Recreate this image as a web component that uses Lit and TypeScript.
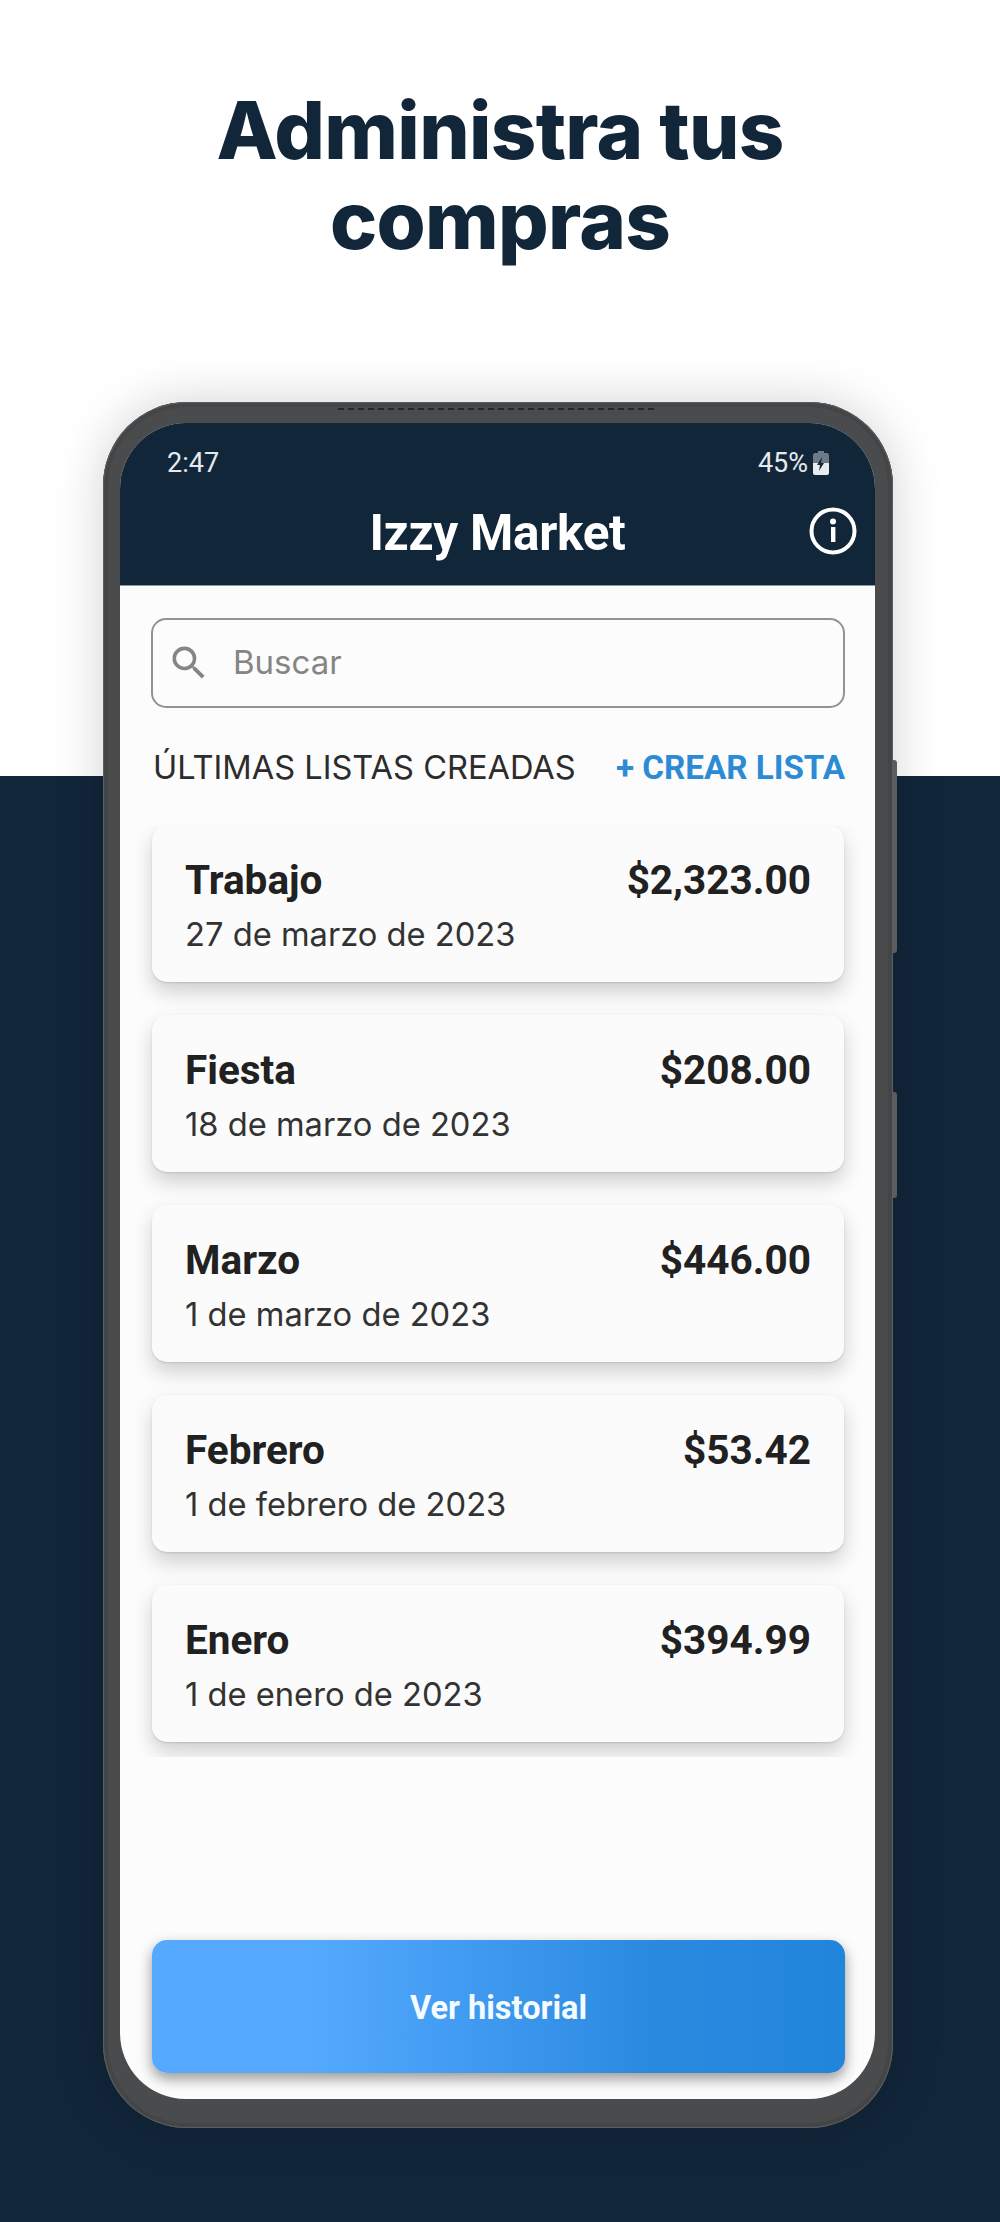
import { LitElement, html, css, svg } from "lit";
import { customElement } from "lit/decorators.js";

const lists = [
  { name: "Trabajo", price: "$2,323.00", date: "27 de marzo de 2023" },
  { name: "Fiesta", price: "$208.00", date: "18 de marzo de 2023" },
  { name: "Marzo", price: "$446.00", date: "1 de marzo de 2023" },
  { name: "Febrero", price: "$53.42", date: "1 de febrero de 2023" },
  { name: "Enero", price: "$394.99", date: "1 de enero de 2023" },
];

const searchIcon = svg`<path fill="#858585" d="M15.5 14h-.79l-.28-.27A6.47 6.47 0 0 0 16 9.5 6.5 6.5 0 1 0 9.5 16c1.61 0 3.09-.59 4.23-1.57l.27.28v.79l5 4.99L20.49 19l-4.99-5zm-6 0C7.01 14 5 11.99 5 9.5S7.01 5 9.5 5 14 7.01 14 9.5 11.99 14 9.5 14z"/>`;

@customElement("app-root")
export class AppRoot extends LitElement {
  static styles = css`
    :host {
      display: block;
      width: 1000px;
      height: 2222px;
      overflow: hidden;
      background: linear-gradient(#fff 0, #fff 776px, #12263a 776px, #12263a 100%);
      font-family: Inter, "Liberation Sans", sans-serif;
    }
    .headline {
      margin: 0;
      height: 402px;
      box-sizing: border-box;
      padding-top: 85px;
      text-align: center;
      font-size: 79.5px;
      line-height: 90px;
      font-weight: 800;
      letter-spacing: -0.7px;
      color: #12263a;
    }
    .phone {
      position: relative;
      width: 790px;
      height: 1726px;
      margin-left: 103px;
      box-sizing: border-box;
      padding: 21px 18px 29px 17px;
      border-radius: 84px;
      background: #4a4b4c;
      box-shadow: 0 0 50px rgba(0, 0, 0, 0.18), inset 0 0 0 1px #5c5d5e, inset 0 0 0 5px #444546;
    }
    .speaker {
      position: absolute;
      left: 235px;
      top: 6px;
      width: 316px;
      height: 0;
      border-top: 2px dashed #262626;
    }
    .side {
      position: absolute;
      left: 790px;
      width: 4px;
      background: #5a5c5e;
      border-radius: 0 3px 3px 0;
    }
    .side.a { top: 358px; height: 193px; }
    .side.b { top: 690px; height: 106px; }
    .screen {
      height: 100%;
      border-radius: 66px;
      overflow: hidden;
      background: #fcfcfc;
      display: flex;
      flex-direction: column;
    }
    .appbar {
      height: 163px;
      flex: none;
      box-sizing: border-box;
      background: #12263a;
      border-bottom: 1px solid #8c96a0;
      color: #fff;
      font-family: Roboto, sans-serif;
    }
    .status {
      display: flex;
      justify-content: space-between;
      align-items: center;
      padding: 22px 46px 0 47px;
      height: 36px;
      font-size: 27px;
      line-height: 36px;
      color: #e6eaee;
    }
    .batt { display: flex; align-items: center; gap: 5px; }
    .title-row {
      height: 88px;
      margin-top: 7px;
      padding-top: 2px;
      box-sizing: border-box;
      display: flex;
      align-items: center;
      justify-content: center;
      position: relative;
      font-size: 49.5px;
      font-weight: 700;
      letter-spacing: -0.3px;
    }
    .info {
      position: absolute;
      right: 18px;
      top: 19px;
      width: 48px;
      height: 48px;
    }
    .body {
      flex: 1;
      display: flex;
      flex-direction: column;
      min-height: 0;
    }
    .search {
      margin: 32px 30px 0 31px;
      height: 90px;
      box-sizing: border-box;
      border: 2px solid #939393;
      border-radius: 15px;
      display: flex;
      align-items: center;
      padding-left: 14px;
      gap: 22px;
      color: #858585;
      font-size: 33px;
    }
    .search span { position: relative; top: -1px; }
    .search svg { width: 44px; height: 44px; flex: none; }
    .section {
      display: flex;
      justify-content: space-between;
      align-items: center;
      margin: 34px 30px 0 33px;
      height: 50px;
    }
    .section .lbl { font-size: 32.6px; color: #2c2c2c; }
    .section .add {
      font-family: Roboto, sans-serif;
      font-weight: 700;
      font-size: 33.2px;
      color: #2c8bd4;
    }
    .list {
      margin: 33px 15px 0 16px;
      padding: 0 16px 0 16px;
      height: 932px;
      overflow: hidden;
      display: flex;
      flex-direction: column;
      gap: 33px;
      flex: none;
    }
    .card {
      flex: none;
      height: 157px;
      box-sizing: border-box;
      background: #fbfbfb;
      border-radius: 15px;
      padding: 31px 33px 0 33px;
      box-shadow: 0 1px 2px rgba(0, 0, 0, 0.12), 0 10px 20px rgba(0, 0, 0, 0.18);
    }
    .row {
      display: flex;
      justify-content: space-between;
      font-family: Roboto, sans-serif;
      font-weight: 700;
      font-size: 40.5px;
      line-height: 48px;
      color: #212121;
    }
    .date {
      margin-top: 8px;
      font-size: 32.7px;
      line-height: 44px;
      color: #333;
    }
    .cta {
      margin: auto 30px 26px 32px;
      height: 133px;
      flex: none;
      border-radius: 15px;
      padding-top: 2px;
      box-sizing: border-box;
      background: linear-gradient(90deg, #55aaff 22%, #2a8ae0 72%, #2185dc 100%);
      box-shadow: 0 6px 14px rgba(0, 0, 0, 0.4);
      display: flex;
      align-items: center;
      justify-content: center;
      color: #f6fbff;
      font-family: Roboto, sans-serif;
      font-weight: 700;
      font-size: 32.5px;
    }
  `;

  render() {
    return html`
      <h1 class="headline">Administra tus<br />compras</h1>
      <div class="phone">
        <div class="speaker"></div>
        <div class="side a"></div>
        <div class="side b"></div>
        <div class="screen">
          <div class="appbar">
            <div class="status">
              <span>2:47</span>
              <span class="batt">45%
                <svg width="16" height="24" viewBox="0 0 16 24">
                  <path fill="#6d7b89" d="M5 0h6v2h3a2 2 0 0 1 2 2v8H0V4a2 2 0 0 1 2-2h3z"/>
                  <path fill="#e8ecef" d="M0 12h16v10a2 2 0 0 1-2 2H2a2 2 0 0 1-2-2z"/>
                  <path fill="#12263a" d="M9 6l-5 8h3l-1 6 5-8H8z"/>
                </svg>
              </span>
            </div>
            <div class="title-row">
              Izzy Market
              <svg class="info" viewBox="0 0 48 48">
                <circle cx="24" cy="24" r="21.5" fill="none" stroke="#fff" stroke-width="4"/>
                <circle cx="24" cy="14.5" r="3" fill="#fff"/>
                <rect x="22" y="20" width="4.4" height="15" fill="#fff"/>
              </svg>
            </div>
          </div>
          <div class="body">
            <div class="search">
              <svg viewBox="0 0 24 24">${searchIcon}</svg>
              <span>Buscar</span>
            </div>
            <div class="section">
              <span class="lbl">ÚLTIMAS LISTAS CREADAS</span>
              <span class="add">+ CREAR LISTA</span>
            </div>
            <div class="list">
              ${lists.map(
                (l) => html`
                  <div class="card">
                    <div class="row"><span>${l.name}</span><span>${l.price}</span></div>
                    <div class="date">${l.date}</div>
                  </div>
                `
              )}
            </div>
            <div class="cta">Ver historial</div>
          </div>
        </div>
      </div>
    `;
  }
}
